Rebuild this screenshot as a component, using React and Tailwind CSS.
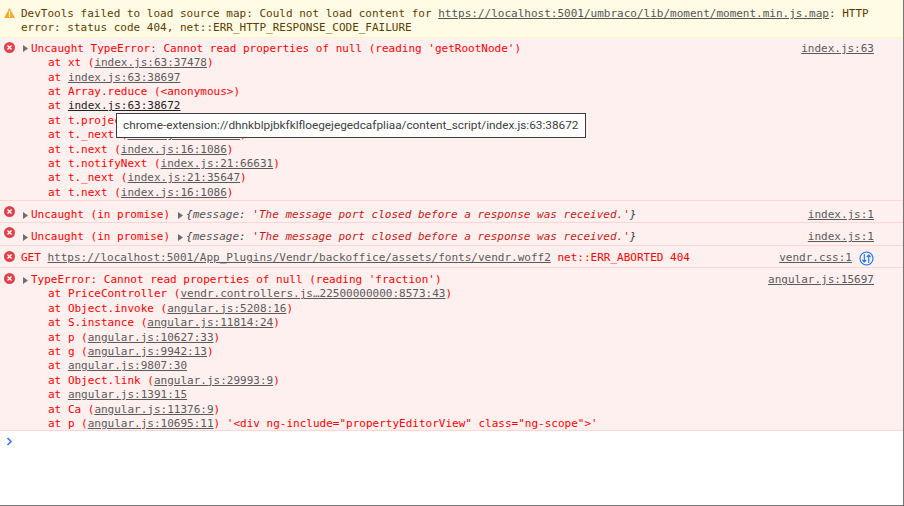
import React from 'react';

const Link = ({ children, dark }) => (
  <span className={`underline ${dark ? 'text-[#222222]' : 'text-[#5a5a5a]'}`}>{children}</span>
);

const ErrorIcon = () => (
  <svg width="11" height="11" viewBox="0 0 11 11" className="block shrink-0">
    <circle cx="5.5" cy="5.5" r="5.5" fill="#e0414b" />
    <path d="M3.5 3.5l4 4M7.5 3.5l-4 4" stroke="#fff" strokeWidth="1.4" />
  </svg>
);

const WarnIcon = () => (
  <svg width="11" height="10" viewBox="0 0 11 10" className="block shrink-0">
    <path d="M5.5 0L11 10H0z" fill="#f2ab26" />
    <path d="M5.5 3v4M5.5 7.6v1.4" stroke="#fff" strokeWidth="1.3" />
  </svg>
);

const Arrow = ({ className = '' }) => (
  <svg width="5" height="7" viewBox="0 0 5 7" className={`inline-block shrink-0 ${className}`}>
    <path d="M0 0l5 3.5L0 7z" fill="#6e6e6e" />
  </svg>
);

const NetworkIcon = () => (
  <svg width="15" height="15" viewBox="0 0 15 15" className="absolute left-[-16px] top-0">
    <circle cx="7.5" cy="7.5" r="6.5" fill="none" stroke="#1a73e8" strokeWidth="1.1" />
    <path d="M5.3 3v8M3.4 9l1.9 2 1.9-2M9.7 12V4M7.8 6l1.9-2 1.9 2" fill="none" stroke="#1a73e8" strokeWidth="1.1" />
  </svg>
);

const Stack = ({ children }) => <div className="pl-[27px]">at {children}</div>;

const Source = ({ children }) => (
  <div className="absolute right-[29px] top-0 text-[#5a5a5a] underline">{children}</div>
);

export default function App() {
  return (
    <div className="relative h-[506px] w-[904px] overflow-hidden border-r border-b border-[#757575] bg-white font-['DejaVu_Sans_Mono',monospace] text-[11px] leading-[14.4px]">
      {/* Warning */}
      <div className="flex h-[38px] gap-[6px] border-b border-[#fff5c2] bg-[#fffbe5] pl-[4px] pt-[7px] text-[#5c3c00]">
        <div className="pt-[1px]"><WarnIcon /></div>
        <div className="whitespace-pre">
          <div>DevTools failed to load source map: Could not load content for <span className="text-[#545454] underline">https://localhost:5001/umbraco/lib/moment/moment.min.js.map</span>: HTTP</div>
          <div>error: status code 404, net::ERR_HTTP_RESPONSE_CODE_FAILURE</div>
        </div>
      </div>

      {/* Uncaught TypeError */}
      <div className="relative flex h-[163px] gap-[6px] border-b border-[#ffd6d6] bg-[#fff0f0] pl-[4px] text-[#ff0000]">
        <div className="pt-[4px]"><ErrorIcon /></div>
        <div className="flex-1 whitespace-pre pt-[3.7px]">
          <div className="flex items-center gap-[3px] pl-[2px]"><Arrow /><span>Uncaught TypeError: Cannot read properties of null (reading 'getRootNode')</span></div>
          <Stack>xt (<Link>index.js:63:37478</Link>)</Stack>
          <Stack><Link>index.js:63:38697</Link></Stack>
          <Stack>Array.reduce (&lt;anonymous&gt;)</Stack>
          <Stack><Link dark>index.js:63:38672</Link></Stack>
          <Stack>t.project (<Link>index.js:63:38672</Link>)</Stack>
          <Stack>t._next (<Link>index.js:63:38672</Link>)</Stack>
          <Stack>t.next (<Link>index.js:16:1086</Link>)</Stack>
          <Stack>t.notifyNext (<Link>index.js:21:66631</Link>)</Stack>
          <Stack>t._next (<Link>index.js:21:35647</Link>)</Stack>
          <Stack>t.next (<Link>index.js:16:1086</Link>)</Stack>
        </div>
        <div className="absolute right-0 top-[4px] h-[14px] w-0"><Source>index.js:63</Source></div>
      </div>

      {/* Promise rejections */}
      {[0, 1].map((i) => (
        <div key={i} className={`relative flex gap-[6px] border-b border-[#ffd6d6] bg-[#fff0f0] pl-[4px] text-[#ff0000] ${i === 0 ? 'h-[22px]' : 'h-[23px]'}`}>
          <div className={i === 0 ? 'pt-[5px]' : 'pt-[4px]'}><ErrorIcon /></div>
          <div className="flex flex-1 items-center self-start whitespace-pre pl-[2px] pt-[7px]">
            <Arrow className="mr-[3px]" />
            <span>Uncaught (in promise)</span>
            <Arrow className="ml-[8px] mr-[3px]" />
            <span className="italic"><span className="text-[#303942]">{'{'}</span><span className="text-[#565656]">message</span><span className="text-[#303942]">: </span><span className="text-[#c41a16]">'The message port closed before a response was received.'</span><span className="text-[#303942]">{'}'}</span></span>
          </div>
          <div className="absolute right-0 top-[7px] h-[14px] w-0"><Source>index.js:1</Source></div>
        </div>
      ))}

      {/* Failed font request */}
      <div className="relative flex h-[22px] gap-[6px] border-b border-[#ffd6d6] bg-[#fff0f0] pl-[4px] text-[#ff0000]">
        <div className="pt-[5px]"><ErrorIcon /></div>
        <div className="flex-1 whitespace-pre pt-[5px]">GET <Link>https://localhost:5001/App_Plugins/Vendr/backoffice/assets/fonts/vendr.woff2</Link> net::ERR_ABORTED 404</div>
        <div className="absolute right-[22px] top-[5px] h-[14px] w-0"><Source>vendr.css:1</Source></div>
        <div className="absolute right-[28px] top-[5px] h-[14px] w-0"><NetworkIcon /></div>
      </div>

      {/* Angular TypeError */}
      <div className="relative flex h-[163px] gap-[6px] border-b border-[#ffd6d6] bg-[#fff0f0] pl-[4px] text-[#ff0000]">
        <div className="pt-[5px]"><ErrorIcon /></div>
        <div className="flex-1 whitespace-pre pt-[5px]">
          <div className="flex items-center gap-[3px] pl-[2px]"><Arrow /><span>TypeError: Cannot read properties of null (reading 'fraction')</span></div>
          <Stack>PriceController (<Link>vendr.controllers.js…22500000000:8573:43</Link>)</Stack>
          <Stack>Object.invoke (<Link>angular.js:5208:16</Link>)</Stack>
          <Stack>S.instance (<Link>angular.js:11814:24</Link>)</Stack>
          <Stack>p (<Link>angular.js:10627:33</Link>)</Stack>
          <Stack>g (<Link>angular.js:9942:13</Link>)</Stack>
          <Stack><Link>angular.js:9807:30</Link></Stack>
          <Stack>Object.link (<Link>angular.js:29993:9</Link>)</Stack>
          <Stack><Link>angular.js:1391:15</Link></Stack>
          <Stack>Ca (<Link>angular.js:11376:9</Link>)</Stack>
          <Stack>p (<Link>angular.js:10695:11</Link>) '&lt;div ng-include="propertyEditorView" class="ng-scope"&gt;'</Stack>
        </div>
        <div className="absolute right-0 top-[5px] h-[14px] w-0"><Source>angular.js:15697</Source></div>
      </div>

      {/* Prompt */}
      <div className="pl-[6px] pt-[6px]">
        <svg width="7" height="9" viewBox="0 0 7 9" className="block">
          <path d="M1.5 1l3.5 3.5L1.5 8" fill="none" stroke="#367cf1" strokeWidth="1.7" />
        </svg>
      </div>

      {/* Link tooltip */}
      <div className="absolute left-[116px] top-[113px] flex h-[25px] w-[470px] items-center whitespace-nowrap border border-[#3c3c3c] bg-white pl-[6px] font-['Roboto',sans-serif] text-[11.8px] text-[#404040]">
        chrome-extension://dhnkblpjbkfklfloegejegedcafpliaa/content_script/index.js:63:38672
      </div>
    </div>
  );
}
